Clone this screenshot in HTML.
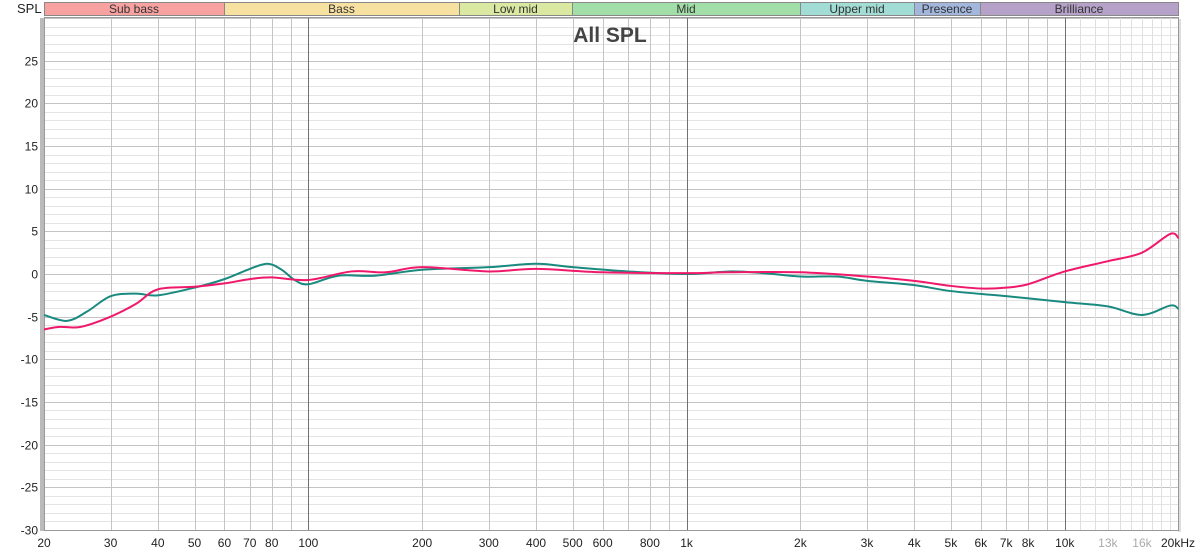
<!DOCTYPE html>
<html><head><meta charset="utf-8"><style>
html,body{margin:0;padding:0;background:#fff;width:1200px;height:554px;overflow:hidden}
svg{display:block;font-family:"Liberation Sans",sans-serif}
</style></head><body>
<svg id="s" width="1200" height="554" xmlns="http://www.w3.org/2000/svg"></svg>
<script>
var s=document.getElementById('s'),h='';
var X0=44,D=378.2,L=44,R=1178,T=17,B=530;
function fx(f){return X0+D*Math.log10(f/20);}
function fy(d){return 274-d*8.53;}
// bands
var bands=[[44,224,'#f7a1a1','Sub bass'],[224,459,'#f7e1a1','Bass'],[459,572,'#d9e9a1','Low mid'],[572,800,'#a2dfa8','Mid'],[800,914,'#a2ddd5','Upper mid'],[914,980,'#a3b7dd','Presence'],[980,1178,'#b6a2c9','Brilliance']];
bands.forEach(function(b){h+='<rect x="'+(b[0]+.5)+'" y="2.5" width="'+(b[1]-b[0])+'" height="13" fill="'+b[2]+'" stroke="#888"/>';h+='<text x="'+((b[0]+b[1])/2)+'" y="13" font-size="12" text-anchor="middle" fill="#333">'+b[3]+'</text>';});
h+='<text x="17" y="13" font-size="13" fill="#222">SPL</text>';
// shadow
h+='<rect x="40" y="'+(T+1)+'" width="4" height="'+(B-T)+'" fill="#bbb"/><rect x="'+R+'" y="'+(T+2)+'" width="3" height="'+(B-T)+'" fill="#ddd"/>';
// horizontal grid
for(var d=-30;d<=30;d++){var y=Math.round(fy(d))+.5;var c=(d%5==0)?'#c4c4c4':'#e4e4e4';h+='<line x1="'+L+'" x2="'+R+'" y1="'+y+'" y2="'+y+'" stroke="'+c+'"/>';
 if(d%5==0&&d<30)h+='<text x="38" y="'+(y+4)+'" font-size="12" text-anchor="end" fill="#222">'+d+'</text>';}
// vertical grid
var labels={20:'20',30:'30',40:'40',50:'50',60:'60',70:'70',80:'80',100:'100',200:'200',300:'300',400:'400',500:'500',600:'600',800:'800',1000:'1k',2000:'2k',3000:'3k',4000:'4k',5000:'5k',6000:'6k',7000:'7k',8000:'8k',10000:'10k',13000:'13k',16000:'16k'};
[10,100,1000].forEach(function(dec){for(var m=2;m<=10;m++){var f=dec*m;if(f<20)continue;var x=Math.round(fx(f))+.5;var c=(m==10&&f<20000)?'#707070':'#c4c4c4';h+='<line x1="'+x+'" x2="'+x+'" y1="'+T+'" y2="'+B+'" stroke="'+c+'"/>';}});
for(var k=11;k<=19;k++){var x=Math.round(fx(k*1000))+.5;h+='<line x1="'+x+'" x2="'+x+'" y1="'+T+'" y2="'+B+'" stroke="#e0e0e0"/>';}
for(var f in labels){var x=fx(+f);var col=(+f>10000)?'#aaa':'#222';h+='<text x="'+x+'" y="547" font-size="12" text-anchor="middle" fill="'+col+'">'+labels[f]+'</text>';}
h+='<text x="1178" y="547" font-size="12" text-anchor="middle" fill="#222">20kHz</text>';
h+='<rect x="'+(L+.5)+'" y="'+(T+.5)+'" width="'+(R-L)+'" height="'+(B-T)+'" fill="none" stroke="#999"/>';
h+='<text x="610" y="42" font-size="21" font-weight="bold" text-anchor="middle" fill="#444">All SPL</text>';
function curve(pts,col){var p=pts.map(function(a){return [fx(a[0]),fy(a[1])];});var d='M'+p[0][0]+' '+p[0][1];
for(var i=0;i<p.length-1;i++){var p0=p[i-1]||p[i],p1=p[i],p2=p[i+1],p3=p[i+2]||p2;
d+=' C'+(p1[0]+(p2[0]-p0[0])/6)+' '+(p1[1]+(p2[1]-p0[1])/6)+' '+(p2[0]-(p3[0]-p1[0])/6)+' '+(p2[1]-(p3[1]-p1[1])/6)+' '+p2[0]+' '+p2[1];}
return '<path d="'+d+'" fill="none" stroke="'+col+'" stroke-width="2"/>';}
var teal=[[20,-4.8],[23,-5.5],[26,-4.4],[30,-2.6],[35,-2.3],[40,-2.5],[50,-1.6],[60,-0.6],[70,0.6],[78,1.2],[85,0.5],[92,-0.7],[100,-1.2],[120,-0.2],[150,-0.2],[200,0.5],[300,0.8],[400,1.2],[500,0.8],[700,0.3],[1000,0],[1300,0.3],[1600,0.1],[2000,-0.3],[2500,-0.3],[3000,-0.8],[4000,-1.3],[5000,-2],[7000,-2.6],[10000,-3.3],[13000,-3.8],[16000,-4.8],[19000,-3.7],[20000,-4.1]];
var pink=[[20,-6.5],[22,-6.2],[25,-6.2],[30,-5],[35,-3.5],[40,-1.8],[50,-1.5],[60,-1.1],[70,-0.6],[80,-0.4],[100,-0.7],[130,0.3],[160,0.2],[200,0.8],[300,0.3],[400,0.6],[600,0.2],[1000,0.1],[1300,0.2],[2000,0.2],[3000,-0.3],[4000,-0.8],[5000,-1.4],[6000,-1.7],[7000,-1.6],[8000,-1.2],[10000,0.3],[13000,1.5],[16000,2.5],[19000,4.7],[20000,4.2]];
h+=curve(teal,'#1a8a80')+curve(pink,'#f0186a');
s.innerHTML=h;
</script>
</body></html>
